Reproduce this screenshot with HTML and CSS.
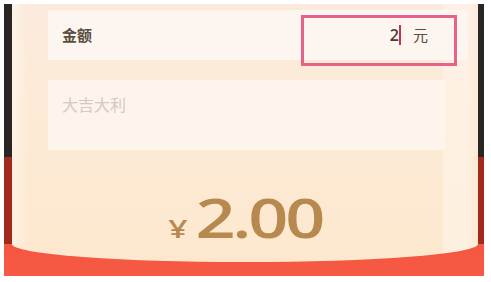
FILE: index.html
```html
<!DOCTYPE html>
<html lang="zh-CN">
<head>
<meta charset="utf-8">
<title>发红包</title>
<link rel="stylesheet" href="styles.css">
</head>
<body>
<div class="frame">
  <div class="card">
    <div class="row">
      <span class="label">金额</span>
      <span class="input"><span class="val">2</span><span class="cursor"></span><span class="unit">元</span></span>
      <div class="highlight"></div>
    </div>
    <div class="message">大吉大利</div>
    <div class="total"><span class="sum"><span class="yen">¥</span><span class="num">2.00</span></span></div>
  </div>
</div>
</body>
</html>
```

FILE: styles.css
```css
* { box-sizing: border-box; }
html, body { margin: 0; padding: 0; background: #ffffff; overflow: hidden; }
body { font-family: "Noto Sans CJK SC", "Noto Sans", sans-serif; }

.frame {
  margin: 4px 0 0 4px;
  width: 480px;
  height: 272px;
  padding: 0 6px 0 8px;
  background: linear-gradient(to bottom, #2a2624 0, #2a2624 153px, #a3291d 153px, #a3291d 240px, #f5563f 240px, #f65a44 272px);
}

.card {
  height: 258px;
  padding: 6px 10px 0 36px;
  background:
    linear-gradient(to right, rgba(255,248,238,0.6) 0, rgba(255,248,238,0) 16px, rgba(255,248,238,0) calc(100% - 36px), rgba(255,246,236,0.55) calc(100% - 34px), rgba(255,246,236,0.55) calc(100% - 10px), rgba(255,248,238,0) 100%),
    linear-gradient(to bottom, #fbe9de 0, #fcebd9 60px, #fde9d1 200px, #fde8cf 258px);
  border-radius: 0 0 50% 50% / 0 0 18px 18px;
}

.row {
  position: relative;
  height: 50px;
  display: flex;
  align-items: center;
  padding: 0 40px 0 14px;
  background: #fdf5ef;
}

.label {
  font-size: 15px;
  font-weight: 700;
  color: #5a4d41;
  line-height: 20px;
}

.input {
  margin-left: auto;
  display: flex;
  align-items: center;
  font-size: 15px;
  line-height: 20px;
}

.val { color: #4d3b3b; font-family: "Open Sans", sans-serif; font-size: 16px; font-weight: 600; }

.cursor {
  width: 2px;
  height: 20px;
  background: #c8324f;
  margin: 0 12px 0 0;
}

.unit { color: #5c4c3f; }

.highlight {
  position: absolute;
  left: 253px;
  top: 5px;
  width: 156px;
  height: 51px;
  border: 3px solid #e6628b;
}

.message {
  margin-top: 20px;
  margin-right: 23px;
  height: 70px;
  padding: 14px 14px;
  background: #fdf4ec;
  font-size: 16px;
  line-height: 20px;
  color: #d4cac2;
}

.total {
  margin: 40px -10px 0 -36px;
  height: 54px;
  display: flex;
  justify-content: center;
}

.sum {
  display: inline-flex;
  align-items: baseline;
  color: #b8894f;
  font-family: "Open Sans", sans-serif;
  font-weight: 600;
  line-height: 54px;
  transform: scaleX(1.3);
  transform-origin: center;
}

.yen {
  font-size: 26px;
  font-weight: 600;
  margin-right: 6px;
}

.num {
  font-size: 54px;
  letter-spacing: -2.5px;
}
```
